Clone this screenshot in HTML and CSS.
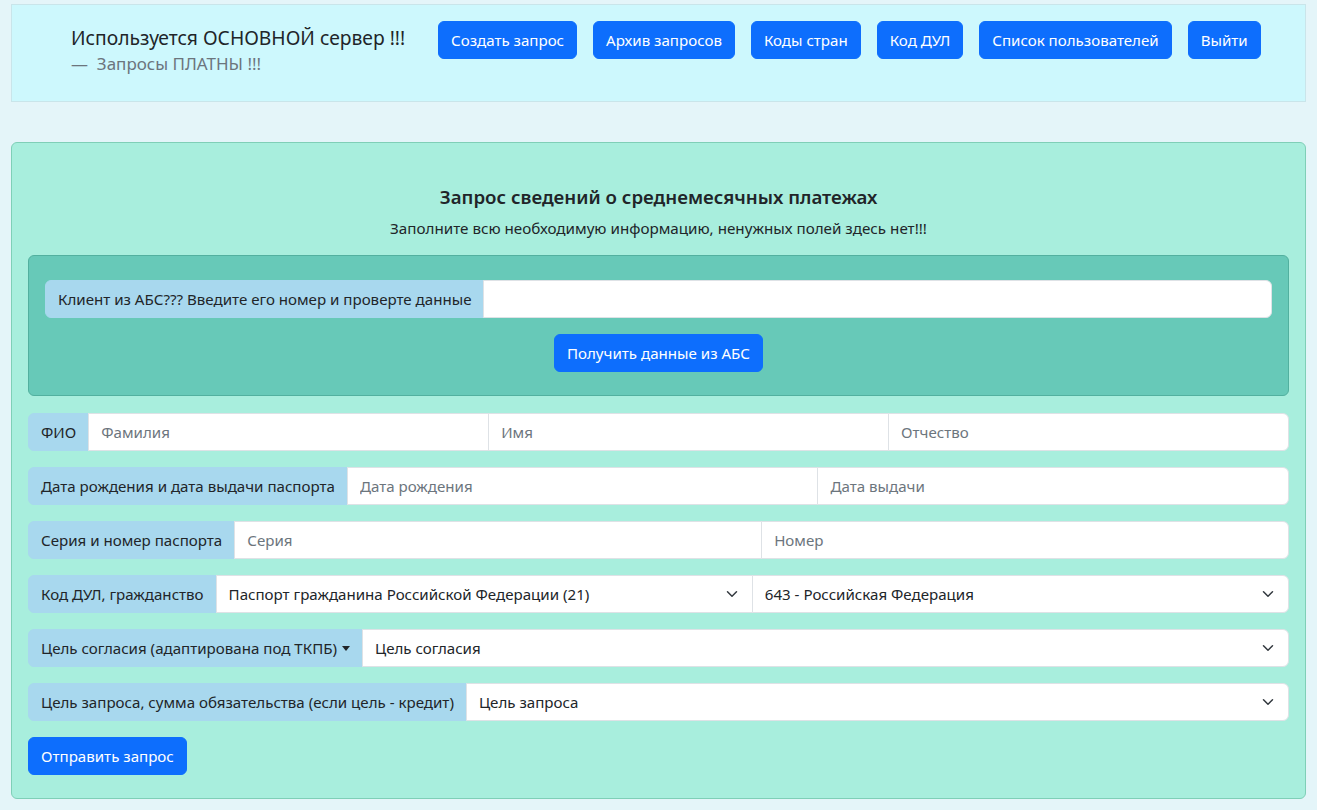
FILE: index.html
```html
<!DOCTYPE html>
<html lang="ru">
<head>
<meta charset="utf-8">
<title>Запрос сведений</title>
<link rel="stylesheet" href="styles.css">
</head>
<body>
<header class="topbar">
  <div class="brand">
    <div class="brand-title">Используется ОСНОВНОЙ сервер !!!</div>
    <div class="brand-sub">—&nbsp; Запросы ПЛАТНЫ !!!</div>
  </div>
  <nav class="nav">
    <button class="btn">Создать запрос</button>
    <button class="btn">Архив запросов</button>
    <button class="btn">Коды стран</button>
    <button class="btn">Код ДУЛ</button>
    <button class="btn">Список пользователей</button>
    <button class="btn">Выйти</button>
  </nav>
</header>

<main class="card">
  <h1 class="card-title">Запрос сведений о среднемесячных платежах</h1>
  <p class="card-sub">Заполните всю необходимую информацию, ненужных полей здесь нет!!!</p>

  <section class="abs-box">
    <div class="group">
      <span class="label">Клиент из АБС??? Введите его номер и проверте данные</span>
      <input class="field" type="text">
    </div>
    <div class="center">
      <button class="btn">Получить данные из АБС</button>
    </div>
  </section>

  <div class="group row">
    <span class="label">ФИО</span>
    <input class="field" type="text" placeholder="Фамилия">
    <input class="field" type="text" placeholder="Имя">
    <input class="field" type="text" placeholder="Отчество">
  </div>

  <div class="group row">
    <span class="label">Дата рождения и дата выдачи паспорта</span>
    <input class="field" type="text" placeholder="Дата рождения">
    <input class="field" type="text" placeholder="Дата выдачи">
  </div>

  <div class="group row">
    <span class="label">Серия и номер паспорта</span>
    <input class="field" type="text" placeholder="Серия">
    <input class="field" type="text" placeholder="Номер">
  </div>

  <div class="group row">
    <span class="label">Код ДУЛ, гражданство</span>
    <select class="field select"><option>Паспорт гражданина Российской Федерации (21)</option></select>
    <select class="field select"><option>643 - Российская Федерация</option></select>
  </div>

  <div class="group row">
    <span class="label toggle">Цель согласия (адаптирована под ТКПБ)</span>
    <select class="field select"><option>Цель согласия</option></select>
  </div>

  <div class="group row">
    <span class="label">Цель запроса, сумма обязательства (если цель - кредит)</span>
    <select class="field select"><option>Цель запроса</option></select>
  </div>

  <div class="actions">
    <button class="btn">Отправить запрос</button>
  </div>
</main>
</body>
</html>
```

FILE: styles.css
```css
* { box-sizing: border-box; }

html, body {
  margin: 0;
  padding: 0;
}

body {
  background: #e4f5f9;
  font-family: "Noto Sans", "Open Sans", sans-serif;
  font-size: 16px;
  line-height: 1.5;
  color: #212529;
  padding: 4px 11px 10px;
}

.topbar {
  display: flex;
  align-items: flex-start;
  height: 98px;
  background: #cdf8fd;
  border: 1px solid #c9e5ea;
  padding: 16px 0 0 59px;
}

.brand {
  flex: 0 0 367px;
  padding-top: 2px;
}

.brand-title {
  font-size: 19.25px;
  line-height: 29px;
}

.brand-sub {
  font-size: 17px;
  line-height: 24px;
  color: #6c757d;
}

.nav {
  display: flex;
  gap: 16px;
}

.btn {
  font-family: inherit;
  font-size: 15.1px;
  line-height: 24px;
  color: #fff;
  background: #0d6efd;
  border: 1px solid #0d6efd;
  border-radius: 6px;
  padding: 6px 12px;
  cursor: pointer;
  white-space: nowrap;
}

.card {
  margin-top: 40px;
  background: #a8eedd;
  border: 1px solid #7fcfb7;
  border-radius: 6px;
  padding: 16px 16px 23px;
}

.card-title {
  margin: 26px 0 9px;
  text-align: center;
  font-size: 18.7px;
  font-weight: 600;
  line-height: 23px;
}

.card-sub {
  margin: 0 0 15px;
  text-align: center;
  font-size: 15.2px;
  line-height: 23px;
}

.abs-box {
  background: #67c9b8;
  border: 1px solid #52b09f;
  border-radius: 6px;
  padding: 24px 16px 23px;
  margin-bottom: 17px;
}

.center {
  display: flex;
  justify-content: center;
  margin-top: 16px;
}

.group {
  display: flex;
  align-items: stretch;
  height: 38px;
}

.row + .row { margin-top: 16px; }

.label {
  display: flex;
  align-items: center;
  flex: 0 0 auto;
  padding: 6px 12px;
  background: #a8d8ee;
  border: 1px solid #a8d8ee;
  border-radius: 6px 0 0 6px;
  white-space: nowrap;
  font-size: 15.1px;
}

.toggle::after {
  content: "";
  display: inline-block;
  margin-left: 5px;
  border-top: 5px solid #212529;
  border-left: 4px solid transparent;
  border-right: 4px solid transparent;
}

.field {
  flex: 1 1 0;
  min-width: 0;
  height: 38px;
  font-family: inherit;
  font-size: 15.1px;
  color: #212529;
  background-color: #fff;
  border: 1px solid #dee2e6;
  margin-left: -1px;
  padding: 6px 12px;
  border-radius: 0;
  outline: none;
}

.field::placeholder { color: #6c757d; }

.group .field:last-child { border-radius: 0 6px 6px 0; }

.select {
  appearance: none;
  -webkit-appearance: none;
  padding-right: 36px;
  background-image: url("data:image/svg+xml,%3csvg xmlns='http://www.w3.org/2000/svg' viewBox='0 0 16 16'%3e%3cpath fill='none' stroke='%23343a40' stroke-linecap='round' stroke-linejoin='round' stroke-width='2' d='m2 5 6 6 6-6'/%3e%3c/svg%3e");
  background-repeat: no-repeat;
  background-position: right 12px center;
  background-size: 16px 12px;
}

.actions { margin-top: 16px; }
```
